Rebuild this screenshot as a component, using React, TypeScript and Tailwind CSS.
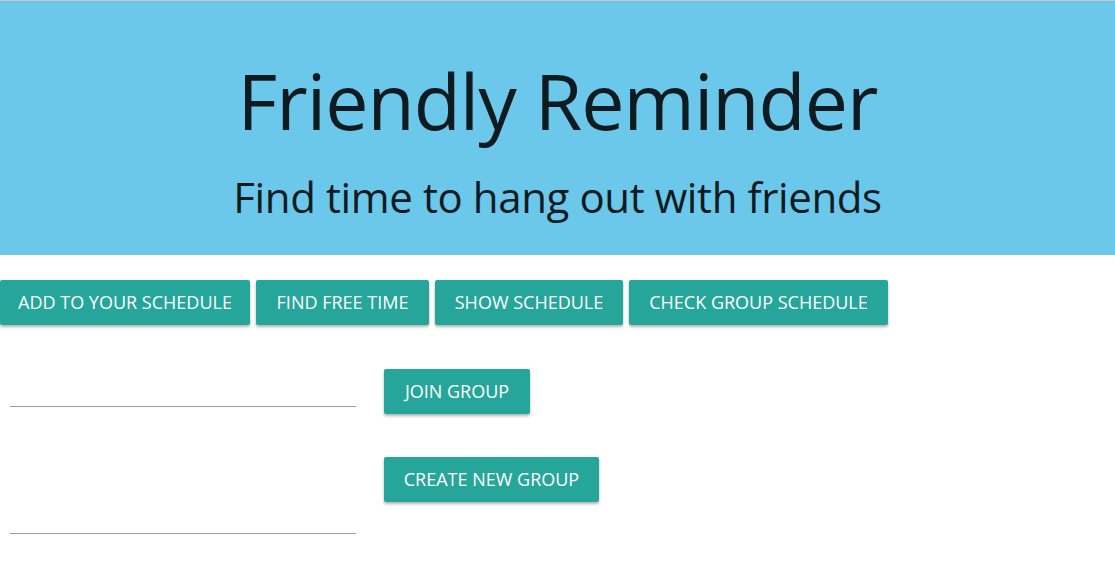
import React from 'react';

const font = { fontFamily: '"Open Sans", "Noto Sans", sans-serif' };

function TealButton({ label, className = '' }: { label: string; className?: string }) {
  return (
    <button
      className={`h-[45px] px-[16px] rounded-[2px] bg-[#26a69a] text-white text-[18px] uppercase shadow-[0_2px_3px_rgba(0,0,0,0.3)] ${className}`}
    >
      {label}
    </button>
  );
}

export default function App() {
  return (
    <div className="w-[1115px] h-[567px] bg-white overflow-hidden" style={font}>
      {/* Header */}
      <header className="border-t border-[#c8c8c8] bg-[#6bc8ea] h-[255px] flex flex-col items-center pt-[54px]">
        <h1 className="text-[77px] leading-[92px] text-[#0f1b20] tracking-[-1px]">Friendly Reminder</h1>
        <p className="text-[42px] leading-[56px] text-[#0f1b20] mt-[22px] tracking-[-0.4px]">
          Find time to hang out with friends
        </p>
      </header>

      {/* Nav buttons */}
      <div className="flex gap-[6px] mt-[25px]">
        <TealButton label="Add to your schedule" className="w-[250px]" />
        <TealButton label="Find free time" className="w-[173px]" />
        <TealButton label="Show schedule" className="w-[188px]" />
        <TealButton label="Check group schedule" className="w-[259px]" />
      </div>

      {/* Group forms */}
      <div className="flex flex-col pl-[10px] mt-[44px] gap-[43px]">
        <div className="flex items-start gap-[28px]">
          <div className="w-[346px] h-[38px] border-b border-[#9e9e9e]" />
          <TealButton label="Join group" className="w-[146px]" />
        </div>
        <div className="flex items-start gap-[28px]">
          <div className="w-[346px] h-[77px] border-b border-[#9e9e9e]" />
          <TealButton label="Create new group" className="w-[215px]" />
        </div>
      </div>
    </div>
  );
}
